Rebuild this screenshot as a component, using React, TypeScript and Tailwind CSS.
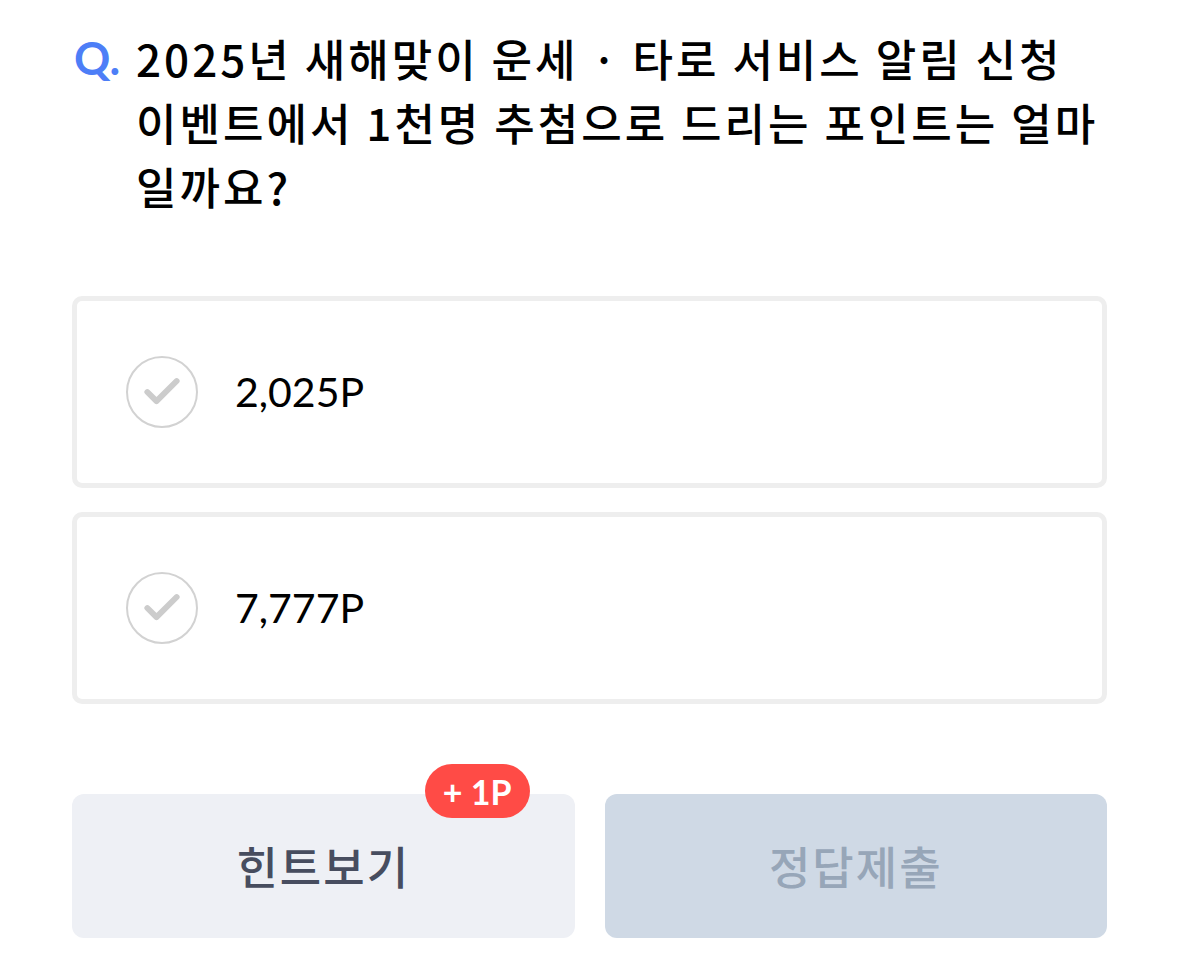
import { Check } from "lucide-react";

const options = ["2,025P", "7,777P"];

const QuizQuestion = () => {
  return (
    <div className="min-h-screen bg-white px-[72px] pt-[26px] font-['Noto_Sans_CJK_KR',sans-serif]">
      {/* Question */}

      <div className="flex">
        <span className="w-[64px] shrink-0 pl-[2px] font-['Lato','Noto_Sans_CJK_KR',sans-serif] text-[45px] font-bold leading-[64px] text-[#4d7ef7]">
          Q.
        </span>

        <h1 className="whitespace-nowrap text-[44px] font-medium leading-[64px] tracking-[3px] text-black">
          2025년 새해맞이 운세 · 타로 서비스 알림 신청
          <br />
          이벤트에서 1천명 추첨으로 드리는 포인트는 얼마
          <br />
          일까요?
        </h1>
      </div>

      {/* Options */}

      <div className="mt-[78px] flex flex-col gap-[24px]">
        {options.map((option) => (
          <button
            key={option}
            className="flex h-[192px] items-center rounded-[10px] border-[5px] border-[#eeeeee] bg-white pl-[49px] text-left"
          >
            <span className="flex h-[72px] w-[72px] items-center justify-center rounded-full border-2 border-[#d2d2d2]">
              <Check size={44} strokeWidth={3.2} className="text-[#cccccc]" />
            </span>

            <span className="ml-[37px] font-['Lato',sans-serif] text-[41px] text-black">
              {option}
            </span>
          </button>
        ))}
      </div>

      {/* Actions */}

      <div className="mt-[90px] grid grid-cols-2 gap-[30px]">
        <div className="relative">
          <button className="flex h-[144px] w-full items-center justify-center rounded-[12px] bg-[#eef0f5] text-[45px] font-medium tracking-[2px] text-[#474d5f]">
            힌트보기
          </button>

          <span className="absolute right-[45px] top-[-30px] flex h-[54px] items-center rounded-full bg-[#ff4b46] px-[18px] font-['Lato',sans-serif] text-[34px] font-bold text-white">
            + 1P
          </span>
        </div>

        <button className="flex h-[144px] w-full items-center justify-center rounded-[12px] bg-[#cfd9e5] text-[45px] font-medium tracking-[2px] text-[#97a6b8]">
          정답제출
        </button>
      </div>
    </div>
  );
};

export default function App() {
  return <QuizQuestion />;
}
